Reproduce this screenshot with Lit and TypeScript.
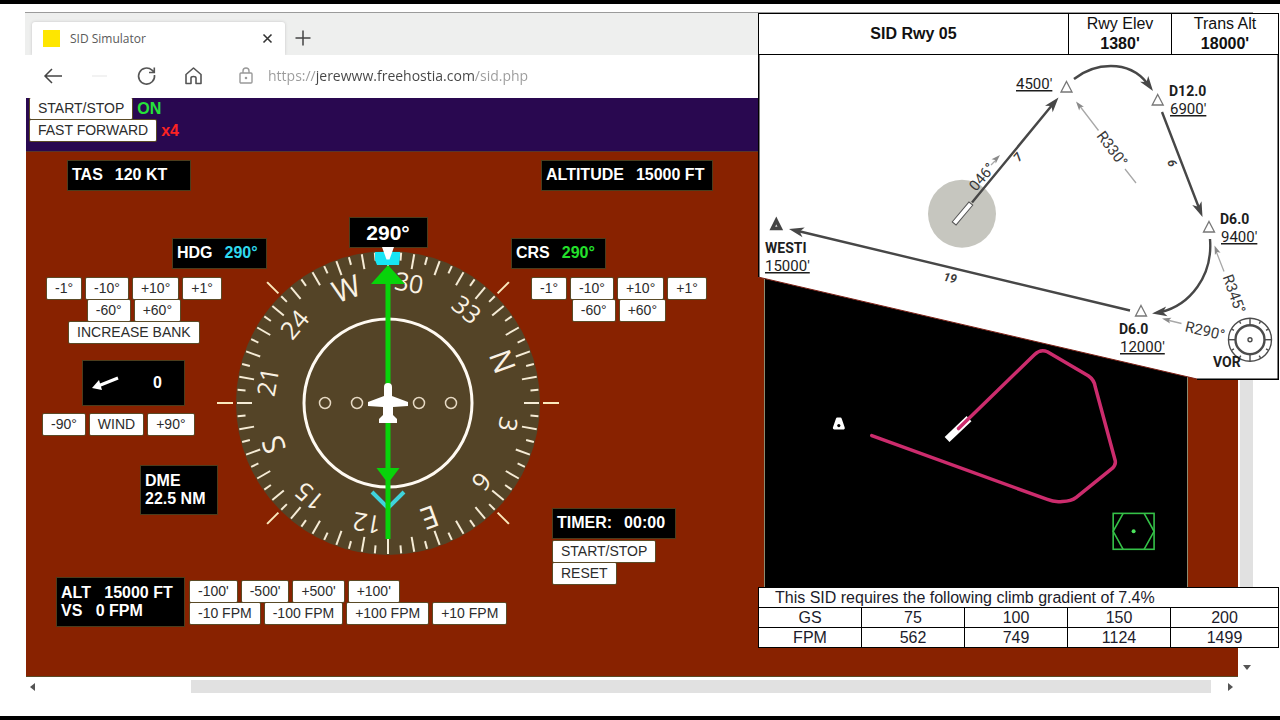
import { LitElement, html, svg, css } from "lit";
import { customElement, property } from "lit/decorators.js";

const shared = css`
  * { box-sizing: border-box; }
  button {
    margin: 0;
    border: 0;
    padding: 0;
    background: none;
    font: inherit;
    color: inherit;
    cursor: pointer;
  }
  svg { display: block; }
`;

const controls = css`
  .key {
    height: 21px;
    padding: 0 8px;
    background: #fff;
    border-radius: 1px;
    box-shadow: 0 0 0 1px #5a4a26;
    color: #2c2c2c;
    font: 14px/21px "Liberation Sans", Arial, sans-serif;
    white-space: nowrap;
  }
  .row { display: flex; gap: 5px; }
  .stack { display: flex; flex-direction: column; gap: 1px; align-items: flex-start; }
  .centered { align-items: center; }
`;

/* Heading indicator: rotating card, course needle, heading bug. */
@customElement("compass-rose")
class CompassRose extends LitElement {
  @property({ type: Number }) heading = 290;

  static styles = [shared, css`
    :host { display: block; }
    .rose { width: 100%; height: auto; overflow: visible; }
    .card { fill: #544427; }
    .tick { stroke: #f6ecd6; stroke-width: 2; }
    .index { stroke: #fbe9bb; stroke-width: 2; }
    .ring { fill: none; stroke: #fffaf2; stroke-width: 3; }
    .dot { fill: none; stroke: #e6d9c3; stroke-width: 1.5; }
    .mark {
      fill: #faf2e4;
      font-family: "Open Sans", "Liberation Sans", sans-serif;
      text-anchor: middle;
    }
    .num { font-size: 25px; }
    .letter { font-size: 30px; }
    .needle { fill: #08d30a; }
    .bug { fill: #18e4f4; }
    .tail { fill: none; stroke: #3fd3dc; stroke-width: 4; }
    .white { fill: #fff; }
  `];

  render() {
    const marks = ["N", "3", "6", "E", "12", "15", "S", "21", "24", "W", "30", "33"];
    const ticks = Array.from({ length: 72 }, (_, i) => i * 5);
    return html`
      <svg class="rose" viewBox="-171 -156 342 313" role="img" aria-label="Compass">
        <circle class="card" r="152"></circle>
        ${ticks.map((a) => svg`<line class="tick" y1="-151" y2=${a % 10 ? -143 : -136} transform="rotate(${a})"></line>`)}
        ${[45, 90, 135, 225, 270, 315].map((a) => svg`<line class="index" y1="-155" y2="-171" transform="rotate(${a})"></line>`)}
        ${marks.map((m, i) => svg`
          <text class="mark ${/\d/.test(m) ? "num" : "letter"}" y=${/\d/.test(m) ? -113 : -111}
            transform="rotate(${i * 30 - this.heading})">${m}</text>`)}
        <circle class="ring" r="84"></circle>
        ${[-63, -31, 31, 63].map((x) => svg`<circle class="dot" cx=${x} r="5.5"></circle>`)}
        <path class="tail" d="M-16 89L0 105L16 89"></path>
        <path class="bug" d="M-13 -151H12V-147L11 -138H-11L-13 -143Z"></path>
        <path class="white" d="M-6 -156H6L1.500 -143.500H-1.500Z"></path>
        <path class="needle" d="M0 -138L17 -119H2.500V65H11.500L2.500 77V136H-2.500V77L-11.500 65H-2.500V-119H-17Z"></path>
        <path class="white" d="M-4 -16Q-4 -20 0 -20Q4 -20 4 -16V-7L20 -1V3L5 4V12L9 16V20H-9V16L-5 12V4L-20 3V-1L-4 -7Z"></path>
      </svg>`;
  }
}

/* Moving map with the flown track. */
@customElement("track-map")
class TrackMap extends LitElement {
  static styles = [shared, css`
    :host { display: block; background: #000; border: solid #8d8b70; border-width: 0 1px; }
    .map { width: 100%; height: auto; }
    .track { fill: none; stroke: #cc2c6d; stroke-width: 3.500; stroke-linejoin: round; stroke-linecap: round; }
    .runway { stroke: #fff; stroke-width: 7; }
    .fix { fill: #fff; stroke: #fff; stroke-width: 3; stroke-linejoin: round; }
    .vor { fill: none; stroke: #35c148; stroke-width: 1.600; }
    .vordot { fill: #4be35c; }
  `];

  render() {
    return html`
      <svg class="map" viewBox="764 250 423 370" role="img" aria-label="Track map">
        <path class="fix" d="M836.500 418.500H839.500L842.500 427.500H833.500Z"></path>
        <circle cx="838" cy="425" r="1.600"></circle>
        <path class="runway" d="M946.500 439L968.500 418"></path>
        <path class="track" d="M958 428L1034 354Q1040 348 1047 351L1088 375Q1094 379 1095 386L1115 460Q1116 464 1112 468L1076 497Q1071 501 1062 501Q1054 502 1047 499L871 435"></path>
        <rect class="vor" x="1113" y="513" width="41" height="36"></rect>
        <path class="vor" d="M1123 513L1113 531L1123 549M1144 513L1154 531L1144 549"></path>
        <circle class="vordot" cx="1133.500" cy="531" r="2"></circle>
      </svg>`;
  }
}

/* Departure procedure plate laid over the simulator. */
@customElement("sid-plate")
class SidPlate extends LitElement {
  static styles = [shared, css`
    :host { display: flex; flex-direction: column; pointer-events: none; color: #111; }
    table {
      width: 100%;
      border-collapse: collapse;
      table-layout: fixed;
      background: #fff;
      font: 16px/19px "Liberation Sans", Arial, sans-serif;
      text-align: center;
      color: #1c1c2b;
    }
    th, td { padding: 0; border: 1px solid #000; font-weight: normal; }
    .head td, .head th { height: 40px; line-height: 20px; color: #111; vertical-align: top; }
    .head th { vertical-align: middle; font-weight: bold; }
    .wide { width: 310px; }
    .mid { width: 103px; }
    .bold { display: block; font-weight: bold; }
    .gradient { margin-top: 207px; }
    .gradient th, .gradient td { height: 20px; }
    .gradient .note { text-align: left; padding-left: 16px; }
    .chart { width: 100%; height: auto; }
    .sheet { fill: #fff; }
    .edge { fill: none; stroke: #000; stroke-width: 1.500; }
    .cut { stroke: #7c2015; stroke-width: 1; }
    .leg { fill: none; stroke: #474747; stroke-width: 2.400; }
    .head-dark { fill: #474747; }
    .radial { stroke: #a8a8a8; stroke-width: 1.300; fill: none; }
    .head-light { fill: #8a8a8a; }
    .fix { fill: #fff; stroke: #777; stroke-width: 1.300; }
    .westi { fill: #ddd; stroke: #444; stroke-width: 3.500; }
    .airport { fill: #c6c6bf; }
    .rwy { fill: #fff; stroke: #555; stroke-width: 1; }
    .vor { fill: none; stroke: #4c4c4c; stroke-width: 1.400; }
    .vorin { fill: none; stroke: #4c4c4c; stroke-width: 2.400; }
    text { font-family: Roboto, "Liberation Sans", sans-serif; font-size: 15px; fill: #1d1d1d; }
    .name { font-size: 14px; font-weight: bold; }
    .alt { text-decoration: underline; }
    .spin { text-anchor: middle; fill: #3a3a3a; }
    .dist { font-size: 12px; font-style: italic; font-weight: bold; }
  `];

  private arrow(x: number, y: number, angle: number, light = false) {
    return svg`<path class=${light ? "head-light" : "head-dark"} d=${light ? "M0 0L-9 3L-7 0L-9 -3Z" : "M0 0L-15 5L-11 0L-15 -5Z"}
      transform="translate(${x} ${y}) rotate(${angle})"></path>`;
  }

  render() {
    const fixes = [[1066.5, 86], [1157.7, 99], [1209, 226], [1141, 310]];
    return html`
      <table class="head">
        <colgroup><col class="wide"><col class="mid"><col></colgroup>
        <tr>
          <th>SID Rwy 05</th>
          <td>Rwy Elev<span class="bold">1380'</span></td>
          <td>Trans Alt<span class="bold">18000'</span></td>
        </tr>
      </table>
      <svg class="chart" viewBox="758 54 521 325" role="img" aria-label="Departure chart">
        <path class="sheet" d="M758 54H1279V378H1197L758 276Z"></path>
        <path class="cut" d="M758 276L1197 378"></path>
        <path class="edge" d="M758.750 54V276M1197 378.250H1278.250V54"></path>
        <circle class="airport" cx="962" cy="212.700" r="34"></circle>
        <path class="leg" d="M972 201.500L1053 103M1074 78C1094 62 1128 58 1147 82M1162 111L1199 207M1210 238C1213 275 1190 304 1161 311M1130 309.500L798 230"></path>
        ${this.arrow(1058.5, 96.5, -50)}
        ${this.arrow(1153, 90, 54)}
        ${this.arrow(1202.5, 216, 68)}
        ${this.arrow(1152, 312.5, 172)}
        ${this.arrow(789, 228, 193)}
        <rect class="rwy" x="-13" y="-2.500" width="26" height="5" transform="translate(962.500 212.500) rotate(-50)"></rect>
        <path class="radial" d="M1079 104L1098.500 129.500M1125 168L1136 182M1216 250L1224 270.500M1167 319L1181.500 322.500M991 164L995 160"></path>
        ${this.arrow(1076, 100.5, 232, true)}
        ${this.arrow(1214.5, 244.5, 249, true)}
        ${this.arrow(1162, 317.5, 194, true)}
        ${this.arrow(1000, 154, -45, true)}
        ${fixes.map(([x, y]) => svg`<path class="fix" d="M0 -5.500L5.500 5H-5.500Z" transform="translate(${x} ${y})"></path>`)}
        <path class="westi" d="M776.300 219.500L780.300 227.500H772.300Z"></path>
        <circle class="vor" cx="1250" cy="338.700" r="21.500"></circle>
        <circle class="vorin" cx="1250" cy="338.700" r="14.500"></circle>
        <circle class="vor" cx="1250" cy="338.700" r="2"></circle>
        ${Array.from({ length: 12 }, (_, i) => svg`<line class="vor" y1=${i % 3 ? -18.5 : -21.5} y2=${i % 3 ? -21 : -14} transform="translate(1250 338.700) rotate(${i * 30})"></line>`)}
        <text class="alt" x="1016" y="88">4500'</text>
        <text class="name" x="1169" y="95">D12.0</text>
        <text class="alt" x="1170" y="113">6900'</text>
        <text class="name" x="1220" y="223">D6.0</text>
        <text class="alt" x="1221" y="241">9400'</text>
        <text class="name" x="1119" y="333">D6.0</text>
        <text class="alt" x="1120" y="351">12000'</text>
        <text class="name" x="765" y="252">WESTI</text>
        <text class="alt" x="765" y="270">15000'</text>
        <text class="name" x="1213" y="366">VOR</text>
        <text class="spin" y="5" transform="translate(982 176) rotate(-50)">046°</text>
        <text class="spin" y="5" transform="translate(1112 148) rotate(53)">R330°</text>
        <text class="spin" y="5" transform="translate(1234 293) rotate(70)">R345°</text>
        <text class="spin" y="5" transform="translate(1205 330) rotate(13)">R290°</text>
        <text class="spin dist" y="4" transform="translate(1018 156) rotate(-50)">7</text>
        <text class="spin dist" y="4" transform="translate(1172 162) rotate(68)">6</text>
        <text class="spin dist" y="4" transform="translate(950 277) rotate(12)">19</text>
      </svg>
      <table class="gradient">
        <colgroup><col class="mid"><col class="mid"><col class="mid"><col class="mid"><col></colgroup>
        <tr><th class="note" colspan="5">This SID requires the following climb gradient of 7.4%</th></tr>
        <tr><th>GS</th><td>75</td><td>100</td><td>150</td><td>200</td></tr>
        <tr><th>FPM</th><td>562</td><td>749</td><td>1124</td><td>1499</td></tr>
      </table>`;
  }
}

/* Cockpit panel: readouts, control keys and compass. */
@customElement("flight-panel")
class FlightPanel extends LitElement {
  static styles = [shared, controls, css`
    :host {
      display: grid;
      grid-template-columns: 191px 49px 246px 47px 1fr;
      grid-template-rows: auto auto auto;
      row-gap: 18px;
      align-content: start;
      padding-top: 9px;
    }
    .readout {
      display: flex;
      gap: 12px;
      padding: 5px 4px 6px;
      background: #000;
      box-shadow: 0 0 0 1px #4c3c1c;
      color: #fff;
      font: bold 16px/18px "Liberation Sans", Arial, sans-serif;
      white-space: pre;
    }
    .cyan { color: #2fd9ee; }
    .green { color: #24e02c; }
    .tas { grid-column: 1 / 4; justify-self: start; width: 122px; margin-left: 42px; }
    .altitude { grid-column: 4 / 6; justify-self: start; width: 170px; margin-left: 30px; }
    .left { grid-column: 1 / 3; grid-row: 2; display: flex; flex-direction: column; align-items: flex-start; padding-top: 31px; }
    .hdg { width: 93px; align-self: flex-end; }
    .bank { margin: 10px 0 0 21px; }
    .wind { display: flex; flex-direction: column; align-items: flex-start; gap: 9px; margin: 18px 0 0 17px; }
    .windbox { width: 101px; height: 44px; align-items: center; justify-content: space-between; margin-left: 40px; padding: 0 22px 0 8px; }
    .dme { width: 76px; margin: 31px 0 0 115px; }
    .block { display: block; padding: 6px 4px; }
    .middle { grid-column: 2 / 5; grid-row: 2; display: flex; flex-direction: column; align-items: center; padding-top: 10px; }
    .middle compass-rose { width: 100%; }
    .course { width: 77px; height: 29px; padding: 0; justify-content: center; align-items: center; font-size: 21px; }
    .right { grid-column: 4 / 6; grid-row: 2 / 4; display: flex; flex-direction: column; align-items: flex-start; padding-top: 31px; }
    .crs { width: 93px; }
    .crskeys { margin: 10px 0 0 20px; }
    .timer { display: flex; flex-direction: column; gap: 3px; margin: 188px 0 0 41px; }
    .clock { width: 122px; }
    .bottom { grid-column: 1 / 5; grid-row: 3; display: flex; gap: 6px; align-items: center; padding-left: 31px; }
    .autopilot { width: 127px; }
  `];

  private keys(labels: string[]) {
    return html`<div class="row">${labels.map((l) => html`<button class="key">${l}</button>`)}</div>`;
  }

  render() {
    return html`
      <div class="readout tas"><span>TAS</span><span>120 KT</span></div>
      <div class="readout altitude"><span>ALTITUDE</span><span>15000 FT</span></div>
      <div class="left">
        <div class="readout hdg"><span>HDG</span><span class="cyan">290°</span></div>
        <div class="stack centered bank">
          ${this.keys(["-1°", "-10°", "+10°", "+1°"])}
          ${this.keys(["-60°", "+60°"])}
          ${this.keys(["INCREASE BANK"])}
        </div>
        <div class="wind">
          <div class="readout windbox">
            <svg width="30" height="16" viewBox="0 0 30 16" aria-hidden="true">
              <path d="M27 3L7 11" stroke="#fff" stroke-width="3"></path>
              <path d="M1 13L8 5L11 15Z" fill="#fff"></path>
            </svg>
            <span>0</span>
          </div>
          ${this.keys(["-90°", "WIND", "+90°"])}
        </div>
        <div class="readout block dme"><div>DME</div><div>22.5 NM</div></div>
      </div>
      <div class="middle">
        <div class="readout course">290°</div>
        <compass-rose .heading=${290}></compass-rose>
      </div>
      <div class="right">
        <div class="readout crs"><span>CRS</span><span class="green">290°</span></div>
        <div class="stack centered crskeys">
          ${this.keys(["-1°", "-10°", "+10°", "+1°"])}
          ${this.keys(["-60°", "+60°"])}
        </div>
        <div class="timer">
          <div class="readout clock"><span>TIMER:</span><span>00:00</span></div>
          <div class="stack">
            <button class="key">START/STOP</button>
            <button class="key">RESET</button>
          </div>
        </div>
      </div>
      <div class="bottom">
        <div class="readout block autopilot"><div>ALT   15000 FT</div><div>VS   0 FPM</div></div>
        <div class="stack">
          ${this.keys(["-100'", "-500'", "+500'", "+100'"])}
          ${this.keys(["-10 FPM", "-100 FPM", "+100 FPM", "+10 FPM"])}
        </div>
      </div>`;
  }
}

@customElement("app-root")
class AppRoot extends LitElement {
  static styles = [shared, controls, css`
    :host {
      box-sizing: border-box;
      position: relative;
      display: flex;
      flex-direction: column;
      min-height: 100vh;
      padding: 8px 27px 23px 25px;
      border: solid #000;
      border-width: 4px 0;
      background: #fff;
      overflow: hidden;
      font-family: "Open Sans", sans-serif;
    }
    .browser { flex: 1; display: flex; flex-direction: column; border-top: 1px solid #9b9b9b; }
    .tabs { display: flex; align-items: flex-end; height: 42px; padding-left: 7px; background: #eeefee; }
    .tab {
      display: flex;
      align-items: center;
      width: 253px;
      height: 33px;
      padding: 0 12px 0 11px;
      background: #fff;
      border-radius: 3px 3px 0 0;
      box-shadow: 0 0 3px #c4c4c4;
      color: #5a5a5a;
      font-size: 12px;
    }
    .favicon { width: 17px; height: 17px; margin-right: 10px; background: #fee600; }
    .title { flex: 1; text-align: left; }
    .plus { padding: 0 0 9px 10px; }
    .toolbar { display: flex; align-items: center; height: 43px; padding: 0 0 2px 16px; background: #fff; position: relative; }
    .nav { display: flex; gap: 23px; margin-right: 32px; }
    .url {
      flex: 1;
      min-width: 0;
      margin-left: 14px;
      padding: 0;
      border: 0;
      outline: 0;
      font: 14px/20px "Open Sans", sans-serif;
      color: transparent;
      background: linear-gradient(to right, #9a9a9a 0 48px, #454545 48px 206px, #9a9a9a 206px) text;
    }
    .view { flex: 1; display: flex; gap: 2px; padding-left: 1px; }
    .sim { flex: 1; display: flex; flex-direction: column; background: #882200; border-bottom: 1px solid #5a4a26; }
    .top { height: 54px; padding: 0 4px; background: #290850; border-bottom: 1px solid #59362c; font: bold 16px/21px "Liberation Sans", sans-serif; }
    .on { color: #26e23a; }
    .speed { color: #fb2323; }
    .cockpit { flex: 1; display: flex; }
    .cockpit flight-panel { width: 738px; }
    .cockpit track-map { flex: 1; align-self: flex-start; margin: 99px 50px 0 0; }
    .vbar { display: flex; flex-direction: column; align-items: center; width: 13px; padding-bottom: 7px; }
    .vthumb { flex: 1; width: 100%; margin: 20px 0 42px; background: #e1e1e1; }
    .hbar { display: flex; align-items: center; height: 13px; margin: 3px 20px 0 5px; }
    .hthumb { flex: 1; height: 13px; margin: 0 17px 0 156px; background: #e1e1e1; }
    .plate { position: absolute; top: 9px; right: 1px; width: 521px; }
  `];

  render() {
    return html`
      <main class="browser">
        <div class="tabs">
          <div class="tab">
            <span class="favicon"></span>
            <span class="title">SID Simulator</span>
            <button aria-label="Close tab">
              <svg width="11" height="11" viewBox="0 0 11 11"><path d="M1.500 1.500L9.500 9.500M9.500 1.500L1.500 9.500" stroke="#333" stroke-width="1.600"></path></svg>
            </button>
          </div>
          <button class="plus" aria-label="New tab">
            <svg width="16" height="16" viewBox="0 0 16 16"><path d="M8 0.500V15.500M0.500 8H15.500" stroke="#444" stroke-width="1.500"></path></svg>
          </button>
        </div>
        <div class="toolbar">
          <div class="nav">
            <button aria-label="Back">
              <svg width="24" height="24" viewBox="0 0 24 24" fill="none" stroke="#444" stroke-width="1.500"><path d="M21 12H4.500M11 5L4 12L11 19"></path></svg>
            </button>
            <button aria-label="Forward" disabled>
              <svg width="24" height="24" viewBox="0 0 24 24" stroke="#eee" stroke-width="1.500"><path d="M4 12H19"></path></svg>
            </button>
            <button aria-label="Reload">
              <svg width="24" height="24" viewBox="0 0 24 24" fill="none" stroke="#555" stroke-width="1.600"><path d="M19.500 11A8 8 0 1 1 17 6.200L19 8M19.300 3.500V8.500H14"></path></svg>
            </button>
            <button aria-label="Home">
              <svg width="24" height="24" viewBox="0 0 24 24" fill="none" stroke="#555" stroke-width="1.600" stroke-linejoin="round"><path d="M4 10.500L11.500 4L19 10.500V19.500H14V14Q14 12.500 11.500 12.500Q9 12.500 9 14V19.500H4Z"></path></svg>
            </button>
          </div>
          <svg width="16" height="20" viewBox="0 0 16 20" fill="none" stroke="#999" stroke-width="1.400" aria-hidden="true">
            <rect x="2" y="7" width="12" height="10" rx="1"></rect><path d="M5 7V5Q5 2 8 2Q11 2 11 5V7"></path><circle cx="8" cy="12" r="0.600"></circle>
          </svg>
          <input class="url" aria-label="Address" .value=${"https://jerewww.freehostia.com/sid.php"}>
        </div>
        <div class="view">
          <div class="sim">
            <div class="top stack">
              <div class="row"><button class="key">START/STOP</button><span class="on">ON</span></div>
              <div class="row"><button class="key">FAST FORWARD</button><span class="speed">x4</span></div>
            </div>
            <div class="cockpit">
              <flight-panel></flight-panel>
              <track-map></track-map>
            </div>
          </div>
          <div class="vbar">
            <div class="vthumb"></div>
            <svg width="8" height="5" viewBox="0 0 8 5"><path d="M0 0H8L4 5Z" fill="#555"></path></svg>
          </div>
        </div>
        <div class="hbar">
          <svg width="5" height="8" viewBox="0 0 5 8"><path d="M5 0V8L0 4Z" fill="#555"></path></svg>
          <div class="hthumb"></div>
          <svg width="5" height="8" viewBox="0 0 5 8"><path d="M0 0V8L5 4Z" fill="#555"></path></svg>
        </div>
      </main>
      <sid-plate class="plate"></sid-plate>`;
  }
}
